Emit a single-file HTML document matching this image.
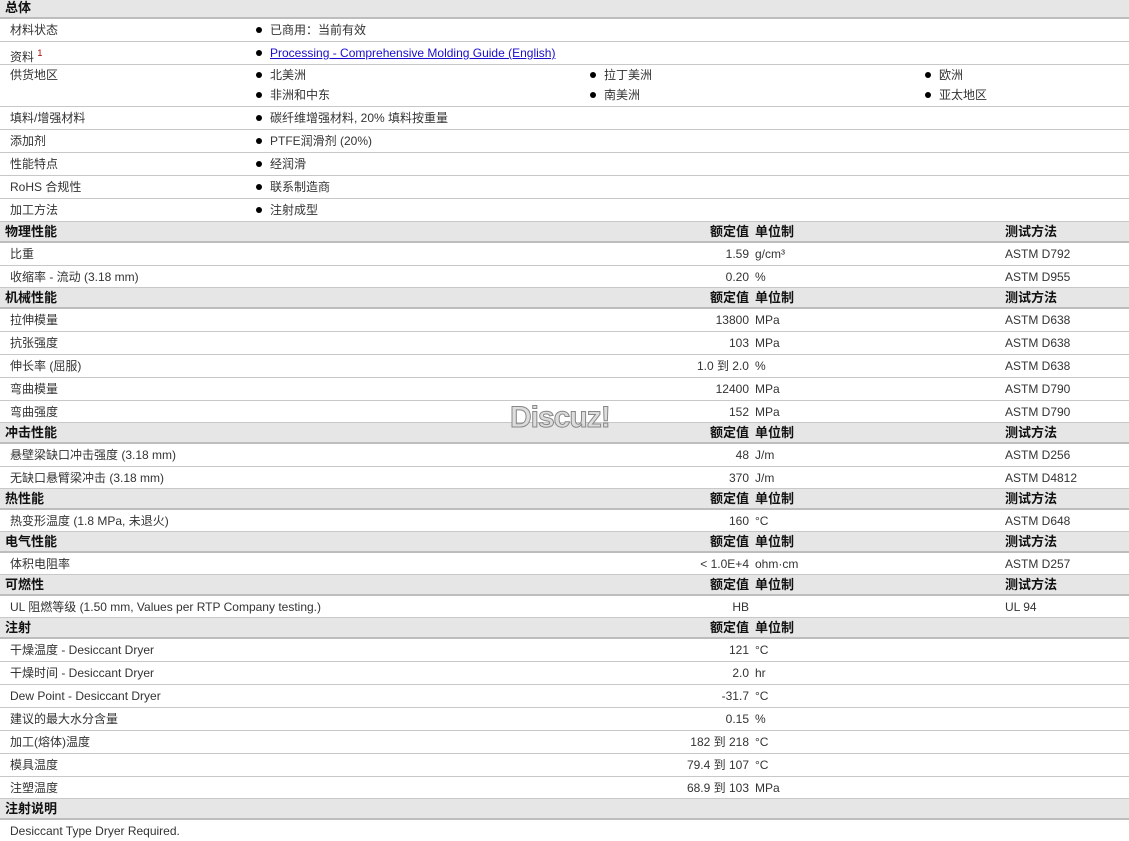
<!DOCTYPE html>
<html><head><meta charset="utf-8"><style>
body{margin:0;width:1129px;height:841px;background:#fff;font-family:"Liberation Sans","Noto Sans CJK SC",sans-serif;font-size:12px;color:#333;position:relative;overflow:hidden}
.r{position:absolute;left:0;width:1129px;border-bottom:1px solid #c8c8c8;box-sizing:border-box}
.h{background:#e6e6e6;border-bottom:2px solid #bdbdbd;font-weight:bold;color:#111;font-size:13px}
.r span{position:absolute;white-space:nowrap;top:1px}
.l{left:10px}.hl{left:5px}
.b{left:256px}.b2{left:590px}.b3{left:925px}
.b::before,.b2::before,.b3::before{content:"";display:inline-block;width:6px;height:6px;border-radius:3px;background:#000;margin-right:8px;vertical-align:1px}
.v{right:380px;text-align:right}
.u{left:755px}.t{left:1005px}
a{color:#1a0dcc}
sup{font-size:9px;color:#a00}
.wm{position:absolute;left:510px;top:401px;font-size:30px;font-weight:bold;color:#ddd;-webkit-text-stroke:1px #888;letter-spacing:-1px;font-family:"Liberation Sans",sans-serif}
</style></head><body>
<div class="r h" style="top:0;height:19px;line-height:15px"><span class="hl" style="top:0">总体</span></div>
<div class="r" style="top:19px;height:23px;line-height:21px"><span class="l">材料状态</span><span class="b">已商用：当前有效</span></div>
<div class="r" style="top:42px;height:23px;line-height:21px"><span class="l">资料 <sup>1</sup></span><span class="b"><a href="#">Processing - Comprehensive Molding Guide (English)</a></span></div>
<div class="r" style="top:65px;height:42px;line-height:19px"><span class="l">供货地区</span><span class="b">北美洲</span><span class="b2">拉丁美洲</span><span class="b3">欧洲</span><span class="b" style="top:21px">非洲和中东</span><span class="b2" style="top:21px">南美洲</span><span class="b3" style="top:21px">亚太地区</span></div>
<div class="r" style="top:107px;height:23px;line-height:21px"><span class="l">填料/增强材料</span><span class="b">碳纤维增强材料, 20% 填料按重量</span></div>
<div class="r" style="top:130px;height:23px;line-height:21px"><span class="l">添加剂</span><span class="b">PTFE润滑剂 (20%)</span></div>
<div class="r" style="top:153px;height:23px;line-height:21px"><span class="l">性能特点</span><span class="b">经润滑</span></div>
<div class="r" style="top:176px;height:23px;line-height:21px"><span class="l">RoHS 合规性</span><span class="b">联系制造商</span></div>
<div class="r" style="top:199px;height:23px;line-height:21px"><span class="l">加工方法</span><span class="b">注射成型</span></div>

<div class="r h" style="top:222px;height:21px;line-height:17px"><span class="hl">物理性能</span><span class="v">额定值</span><span class="u">单位制</span><span class="t">测试方法</span></div>
<div class="r" style="top:243px;height:23px;line-height:21px"><span class="l">比重</span><span class="v">1.59</span><span class="u">g/cm³</span><span class="t">ASTM D792</span></div>
<div class="r" style="top:266px;height:22px;line-height:20px"><span class="l">收缩率 - 流动 (3.18 mm)</span><span class="v">0.20</span><span class="u">%</span><span class="t">ASTM D955</span></div>

<div class="r h" style="top:288px;height:21px;line-height:17px"><span class="hl">机械性能</span><span class="v">额定值</span><span class="u">单位制</span><span class="t">测试方法</span></div>
<div class="r" style="top:309px;height:23px;line-height:21px"><span class="l">拉伸模量</span><span class="v">13800</span><span class="u">MPa</span><span class="t">ASTM D638</span></div>
<div class="r" style="top:332px;height:23px;line-height:21px"><span class="l">抗张强度</span><span class="v">103</span><span class="u">MPa</span><span class="t">ASTM D638</span></div>
<div class="r" style="top:355px;height:23px;line-height:21px"><span class="l">伸长率 (屈服)</span><span class="v">1.0 到 2.0</span><span class="u">%</span><span class="t">ASTM D638</span></div>
<div class="r" style="top:378px;height:23px;line-height:21px"><span class="l">弯曲模量</span><span class="v">12400</span><span class="u">MPa</span><span class="t">ASTM D790</span></div>
<div class="r" style="top:401px;height:22px;line-height:20px"><span class="l">弯曲强度</span><span class="v">152</span><span class="u">MPa</span><span class="t">ASTM D790</span></div>

<div class="r h" style="top:423px;height:21px;line-height:17px"><span class="hl">冲击性能</span><span class="v">额定值</span><span class="u">单位制</span><span class="t">测试方法</span></div>
<div class="r" style="top:444px;height:23px;line-height:21px"><span class="l">悬壁梁缺口冲击强度 (3.18 mm)</span><span class="v">48</span><span class="u">J/m</span><span class="t">ASTM D256</span></div>
<div class="r" style="top:467px;height:22px;line-height:20px"><span class="l">无缺口悬臂梁冲击 (3.18 mm)</span><span class="v">370</span><span class="u">J/m</span><span class="t">ASTM D4812</span></div>

<div class="r h" style="top:489px;height:21px;line-height:17px"><span class="hl">热性能</span><span class="v">额定值</span><span class="u">单位制</span><span class="t">测试方法</span></div>
<div class="r" style="top:510px;height:22px;line-height:20px"><span class="l">热变形温度 (1.8 MPa, 未退火)</span><span class="v">160</span><span class="u">°C</span><span class="t">ASTM D648</span></div>

<div class="r h" style="top:532px;height:21px;line-height:17px"><span class="hl">电气性能</span><span class="v">额定值</span><span class="u">单位制</span><span class="t">测试方法</span></div>
<div class="r" style="top:553px;height:22px;line-height:20px"><span class="l">体积电阻率</span><span class="v">&lt; 1.0E+4</span><span class="u">ohm·cm</span><span class="t">ASTM D257</span></div>

<div class="r h" style="top:575px;height:21px;line-height:17px"><span class="hl">可燃性</span><span class="v">额定值</span><span class="u">单位制</span><span class="t">测试方法</span></div>
<div class="r" style="top:596px;height:22px;line-height:20px"><span class="l">UL 阻燃等级 (1.50 mm, Values per RTP Company testing.)</span><span class="v">HB</span><span class="t">UL 94</span></div>

<div class="r h" style="top:618px;height:21px;line-height:17px"><span class="hl">注射</span><span class="v">额定值</span><span class="u">单位制</span></div>
<div class="r" style="top:639px;height:23px;line-height:21px"><span class="l">干燥温度 - Desiccant Dryer</span><span class="v">121</span><span class="u">°C</span></div>
<div class="r" style="top:662px;height:23px;line-height:21px"><span class="l">干燥时间 - Desiccant Dryer</span><span class="v">2.0</span><span class="u">hr</span></div>
<div class="r" style="top:685px;height:23px;line-height:21px"><span class="l">Dew Point - Desiccant Dryer</span><span class="v">-31.7</span><span class="u">°C</span></div>
<div class="r" style="top:708px;height:23px;line-height:21px"><span class="l">建议的最大水分含量</span><span class="v">0.15</span><span class="u">%</span></div>
<div class="r" style="top:731px;height:23px;line-height:21px"><span class="l">加工(熔体)温度</span><span class="v">182 到 218</span><span class="u">°C</span></div>
<div class="r" style="top:754px;height:23px;line-height:21px"><span class="l">模具温度</span><span class="v">79.4 到 107</span><span class="u">°C</span></div>
<div class="r" style="top:777px;height:22px;line-height:20px"><span class="l">注塑温度</span><span class="v">68.9 到 103</span><span class="u">MPa</span></div>

<div class="r h" style="top:799px;height:21px;line-height:17px"><span class="hl">注射说明</span></div>
<div class="r" style="top:820px;height:21px;line-height:20px;border-bottom:none"><span class="l">Desiccant Type Dryer Required.</span></div>

<div class="wm">Discuz!</div>
</body></html>
